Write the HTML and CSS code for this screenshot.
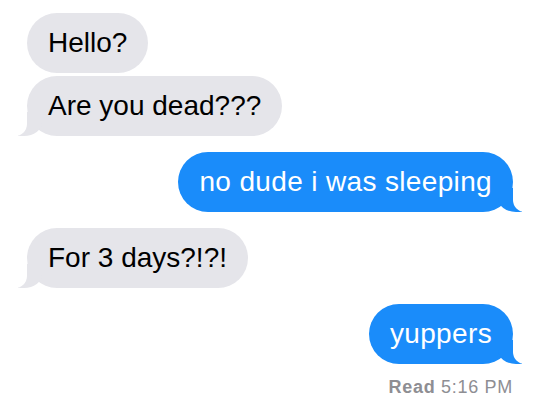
FILE: index.html
```html
<!DOCTYPE html>
<html lang="en">
<head>
    <meta charset="UTF-8">
    <meta name="viewport" content="width=device-width, initial-scale=1.0">
    <title>Messages</title>
    <link rel="stylesheet" href="styles.css">
</head>
<body>
    <div class="thread">
        <div class="bubble them">Hello?</div>
        <div class="bubble them tail">Are you dead???</div>
        <div class="bubble me tail gap">no dude i was sleeping</div>
        <div class="bubble them tail gap">For 3 days?!?!</div>
        <div class="bubble me tail gap">yuppers</div>
        <div class="receipt"><b>Read</b> 5:16 PM</div>
    </div>
</body>
</html>
```

FILE: styles.css
```css
body {
    margin: 0;
    background-color: #fff;
    font-family: "Liberation Sans", Arial, sans-serif;
}
.thread {
    display: flex;
    flex-direction: column;
    gap: 3px;
    padding: 13px 27px 0;
}
.bubble {
    position: relative;
    max-width: 400px;
    padding: 13px 21px;
    font-size: 28px;
    line-height: 34px;
    border-radius: 30px;
    white-space: nowrap;
}
.gap {
    margin-top: 13px;
}
.them {
    align-self: flex-start;
    background-color: #e5e5ea;
    color: #000;
}
.me {
    align-self: flex-end;
    background-color: #1a8cfa;
    color: #fff;
    letter-spacing: 0.35px;
}
.tail::before,
.tail::after {
    content: "";
    position: absolute;
    bottom: 0;
    height: 24px;
}
.them.tail::before {
    left: -9px;
    width: 24px;
    background-color: #e5e5ea;
    border-bottom-right-radius: 18px 14px;
}
.them.tail::after {
    left: -30px;
    width: 30px;
    background-color: #fff;
    border-bottom-right-radius: 12px;
}
.me.tail::before {
    right: -9px;
    width: 24px;
    background-color: #1a8cfa;
    border-bottom-left-radius: 18px 14px;
}
.me.tail::after {
    right: -30px;
    width: 30px;
    background-color: #fff;
    border-bottom-left-radius: 12px;
}
.receipt {
    align-self: flex-end;
    margin-top: 10px;
    font-size: 18px;
    letter-spacing: 0.7px;
    color: #8e8e93;
}
.receipt b {
    font-weight: bold;
}
```
